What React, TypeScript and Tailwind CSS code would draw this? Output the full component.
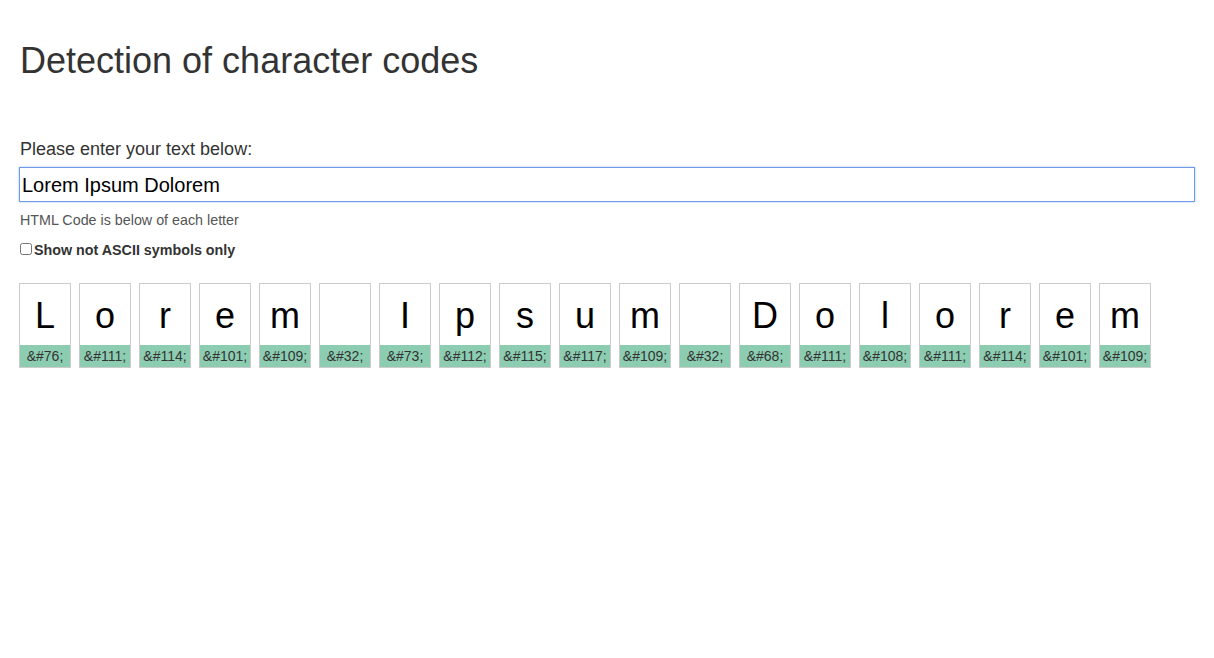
import React from "react";

const text = "Lorem Ipsum Dolorem";

export default function App() {
  return (
    <div className="min-h-screen bg-white px-[19px] pt-[41px] text-[#333]" style={{ fontFamily: '"Liberation Sans", Arial, sans-serif' }}>
      <h1 className="pl-[1px] text-[36px] leading-[40px] font-normal text-[#333]">Detection of character codes</h1>
      <div className="mt-[57px] pl-[1px] text-[18px] leading-[22px]">Please enter your text below:</div>
      <input
        readOnly
        value={text}
        className="mt-[7px] block h-[35px] w-full border border-[#6f9ae8] px-[2px] pt-[2px] text-[20px] text-black outline-none shadow-[0_0_2px_rgba(102,150,233,0.6)]"
      />
      <div className="mt-[9px] pl-[1px] text-[14.3px] leading-[18px] text-[#555]">HTML Code is below of each letter</div>
      <label className="mt-[12px] flex items-center pl-[1px] text-[14.3px] font-bold leading-[18px] text-[#333]">
        <input type="checkbox" className="relative top-[-1px] m-0 h-[12px] w-[12px]" />
        <span className="ml-[2px]">Show not ASCII symbols only</span>
      </label>
      <div className="mt-[24px] flex gap-[8px]">
        {text.split("").map((ch, i) => (
          <div key={i} className="flex w-[52px] flex-col border border-[#ccc]">
            <div className="flex h-[61px] items-center justify-center pt-[3px] text-[36px] text-black">{ch === " " ? "\u00a0" : ch}</div>
            <div className="h-[22px] bg-[#8ccdb1] text-center text-[14px] leading-[22px] text-[#333]">&amp;#{ch.charCodeAt(0)};</div>
          </div>
        ))}
      </div>
    </div>
  );
}
